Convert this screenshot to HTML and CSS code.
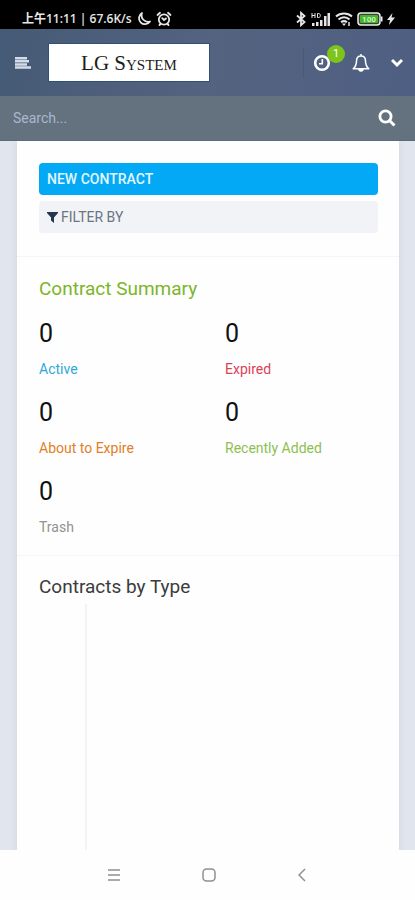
FILE: index.html
```html
<!DOCTYPE html>
<html lang="en">
<head>
<meta charset="utf-8">
<meta name="viewport" content="width=device-width, initial-scale=1">
<title>LG System</title>
<link rel="stylesheet" href="styles.css">
</head>
<body>
<div class="status">
  <div class="status-left">
    <span>上午11:11 | 67.6K/s</span>
    <svg width="16" height="16" viewBox="0 0 16 16" fill="none" stroke="currentColor" stroke-width="1.800" stroke-linejoin="round"><path d="M6 2a6 6 0 1 0 8 8.500A6.500 6.500 0 0 1 6 2z"/></svg>
    <svg width="16" height="16" viewBox="0 0 16 16" fill="none" stroke="currentColor" stroke-width="1.800" stroke-linecap="round"><circle cx="8" cy="8.500" r="5.200"/><path d="M1.500 4 4 1.800M14.500 4 12 1.800M3.500 14l1-1M12.500 14l-1-1M6.200 7.200 8 9l2-1.500"/></svg>
  </div>
  <div class="status-right">
    <svg width="12" height="16" viewBox="0 0 12 16" fill="none" stroke="currentColor" stroke-width="1.800"><path d="M2 4.500 9.500 11 6 14.200V1.800L9.500 5 2 11.500"/></svg>
    <svg width="20" height="16" viewBox="0 0 20 16" fill="currentColor"><path d="M1 12h2.500v3H1zM5 11h2.500v4H5zM9 9h2.500v6H9zM13 5h2.500v10H13zM16.500 2H19v13h-2.500z"/><path d="M1 2v5M4 2v5M1 4.500h3M6.500 2.500v4h1.300c2 0 2-4 0-4z" fill="none" stroke="currentColor"/></svg>
    <svg width="18" height="16" viewBox="0 0 18 16" fill="none" stroke="currentColor" stroke-width="2"><path d="M1 5.500c4.500-4 11.500-4 16 0M3.500 8.500c3.200-3 7.800-3 11 0M6 11.300c2-1.600 4-1.600 6 0"/><path d="m9 15 2-2.500H7z" fill="currentColor" stroke="none"/><path d="M14 11v4" stroke-width="1.500"/></svg>
    <svg width="26" height="14" viewBox="0 0 26 14"><rect x="1" y="1" width="22" height="12" rx="3" fill="#3a3f38" stroke="#eee" stroke-width="1.500"/><rect x="3" y="3" width="18" height="8" rx="1" fill="#45b52b"/><path d="M24 4.500h1.500v5H24z" fill="#eee"/><text class="battery-text" x="12" y="10" text-anchor="middle">100</text></svg>
    <svg width="8" height="14" viewBox="0 0 8 14" fill="currentColor"><path d="M5.500 1 0 8h3l-1 5 6-7.500H4.500z"/></svg>
  </div>
</div>
<header class="topbar">
  <button class="icon-btn" aria-label="Menu"><svg width="16" height="14" viewBox="0 0 16 14" fill="#d3dce8"><path d="M0 1h12v2.500H0zM0 4.100h14v2.500H0zM0 7.200h12v2.500H0zM0 10.300h16v2.500H0z"/></svg></button>
  <a class="logo" href="#">LG System</a>
  <div class="actions">
    <button class="icon-btn timer" aria-label="Timers"><svg width="18" height="18" viewBox="0 0 18 18" fill="none" stroke="currentColor"><circle cx="9" cy="9" r="6.800" stroke-width="2.600"/><path d="M9.300 5v4.700H6" stroke-width="1.600"/></svg><span class="badge">1</span></button>
    <button class="icon-btn" aria-label="Notifications"><svg width="18" height="20" viewBox="0 0 18 20" fill="none" stroke="currentColor" stroke-width="1.500" stroke-linejoin="round"><path d="M9 3C5.800 3 4.500 5.300 4.500 8c0 4-1.300 6-3.300 7.800h15.600C14.800 14 13.500 12 13.500 8c0-2.700-1.300-5-4.500-5zM9 1v2"/><path d="M7 16a2 2 0 0 0 4 0z" fill="currentColor"/></svg></button>
    <button class="icon-btn" aria-label="More"><svg width="12" height="10" viewBox="0 0 12 10" fill="none" stroke="currentColor" stroke-width="3"><path d="m1 2 5 5 5-5"/></svg></button>
  </div>
</header>
<form class="search">
  <input type="search" placeholder="Search..." aria-label="Search">
  <button class="icon-btn" type="button" aria-label="Submit search"><svg width="18" height="18" viewBox="0 0 18 18" fill="none" stroke="currentColor"><circle cx="7.500" cy="7.500" r="5.600" stroke-width="2.800"/><path d="m11.500 11.500 5 5" stroke-width="3"/></svg></button>
</form>
<main class="page">
  <div class="panel">
    <section class="buttons">
      <button class="btn primary">NEW CONTRACT</button>
      <button class="btn filter"><svg width="11" height="12" viewBox="0 0 11 12" fill="#25364d"><path d="M0 1h11v1L7 6.500V12L4 9.500v-3L0 2z"/></svg>FILTER BY</button>
    </section>
    <section class="summary">
      <h2 class="title green">Contract Summary</h2>
      <div class="stats">
        <a class="stat" href="#"><span class="num">0</span><span class="label active">Active</span></a>
        <a class="stat" href="#"><span class="num">0</span><span class="label expired">Expired</span></a>
        <a class="stat" href="#"><span class="num">0</span><span class="label expiring">About to Expire</span></a>
        <a class="stat" href="#"><span class="num">0</span><span class="label recent">Recently Added</span></a>
        <a class="stat" href="#"><span class="num">0</span><span class="label trash">Trash</span></a>
      </div>
    </section>
    <section class="types">
      <h2 class="title">Contracts by Type</h2>
      <div class="chart"></div>
    </section>
  </div>
</main>
<nav class="sysnav">
  <button class="icon-btn" aria-label="Recent apps"><svg width="12" height="14" viewBox="0 0 12 14" stroke="currentColor" stroke-width="1.500"><path d="M0 2h12M0 7h12M0 12h12"/></svg></button>
  <button class="icon-btn" aria-label="Home"><svg width="14" height="14" viewBox="0 0 14 14" fill="none" stroke="currentColor" stroke-width="1.500"><rect x="1" y="1" width="12" height="12" rx="3.500"/></svg></button>
  <button class="icon-btn" aria-label="Back"><svg width="8" height="14" viewBox="0 0 8 14" fill="none" stroke="currentColor" stroke-width="1.500"><path d="M7 1 1 7l6 6"/></svg></button>
</nav>
</body>
</html>
```
FILE: styles.css
```css
* { box-sizing: border-box; }
body {
  margin: 0;
  min-height: 100vh;
  display: flex;
  flex-direction: column;
  font-family: Roboto, "Noto Sans CJK SC", sans-serif;
  font-size: 14px;
  line-height: 20px;
  background: #fefefe;
}
svg { display: block; flex: none; }
button { font: inherit; }
.icon-btn {
  display: flex;
  align-items: center;
  justify-content: center;
  padding: 0;
  border: 0;
  background: none;
  color: inherit;
}
.status {
  height: 29px;
  padding: 8px 20px 0 22px;
  display: flex;
  justify-content: space-between;
  background: #000;
  color: #e6e6e6;
}
.status-left, .status-right { display: flex; align-items: center; gap: 4px; }
.status-left { font-family: "Open Sans", "Noto Sans CJK SC", sans-serif; font-size: 12px; font-weight: 600; }
.battery-text { font-size: 8px; font-weight: 700; fill: #c9f5b8; }
.topbar {
  height: 67px;
  padding: 0 12px 0 15px;
  display: flex;
  align-items: center;
  background: linear-gradient(100deg, #455a76, #54637f 50%, #4f5f83);
  color: #fff;
}
.logo {
  width: 160px;
  height: 37px;
  margin-left: 18px;
  display: flex;
  align-items: center;
  justify-content: center;
  background: #fff;
  box-shadow: 0 0 0 1px #315078;
  color: #1c1c1c;
  font-family: "Liberation Serif", serif;
  font-size: 21px;
  font-variant: small-caps;
  text-decoration: none;
}
.actions {
  height: 30px;
  margin-left: auto;
  padding-left: 9px;
  display: flex;
  align-items: center;
  gap: 21px;
  border-left: 1px solid #4a5a76;
}
.timer { position: relative; }
.badge {
  position: absolute;
  left: 14px;
  top: -9px;
  width: 18px;
  height: 18px;
  border-radius: 50%;
  background: #7fc41c;
  font-size: 11px;
  line-height: 18px;
}
.search {
  height: 45px;
  padding: 0 19px 0 13px;
  display: flex;
  align-items: center;
  background: #64717f;
  border-bottom: 1px solid #5c6a7e;
  color: #fff;
}
.search input {
  flex: 1;
  min-width: 0;
  padding: 0;
  border: 0;
  outline: 0;
  background: none;
  color: #fff;
  font: inherit;
}
.search input::placeholder { color: #a9b8d0; opacity: 1; }
.page {
  flex: 1;
  display: flex;
  padding: 0 16px 0 17px;
  background: #e1e5ed;
}
.panel {
  flex: 1;
  display: flex;
  flex-direction: column;
  background: #fefefe;
  box-shadow: 0 0 6px #cfd3da;
  clip-path: inset(0 -12px);
}
.buttons {
  padding: 22px 21px 23px 22px;
  display: flex;
  flex-direction: column;
  gap: 6px;
  border-bottom: 1px solid #f4f5f6;
}
.btn {
  height: 32px;
  padding: 0 8px;
  display: flex;
  align-items: center;
  gap: 3px;
  border: 0;
  border-radius: 4px;
  text-align: left;
}
.primary { background: #03a9f4; color: #e4f6ff; font-weight: 500; }
.filter { background: #f1f3f7; color: #6d7482; }
.summary {
  padding: 20px 22px 18px;
  border-bottom: 1px solid #f4f5f6;
}
.title { margin: 0; font-size: 19px; line-height: 24px; font-weight: 400; color: #3c3c3c; }
.green { color: #7cb52a; }
.stats {
  margin-top: 18px;
  display: grid;
  grid-template-columns: 1fr 1fr;
  column-gap: 34px;
  row-gap: 19px;
}
.stat { display: flex; flex-direction: column; gap: 10px; text-decoration: none; }
.num { color: #111; font-size: 25px; line-height: 30px; }
.active { color: #2fa8d8; }
.expired { color: #dc4257; }
.expiring { color: #e08028; }
.recent { color: #8cc152; }
.trash { color: #929292; }
.types {
  flex: 1;
  padding: 19px 22px 0;
  display: flex;
  flex-direction: column;
}
.chart { flex: 1; margin: 5px 0 0 46px; border-left: 2px solid #f3f3f4; }
.sysnav {
  height: 50px;
  padding-right: 2px;
  display: flex;
  align-items: center;
  justify-content: center;
  gap: 82px;
  color: #909090;
}
```
